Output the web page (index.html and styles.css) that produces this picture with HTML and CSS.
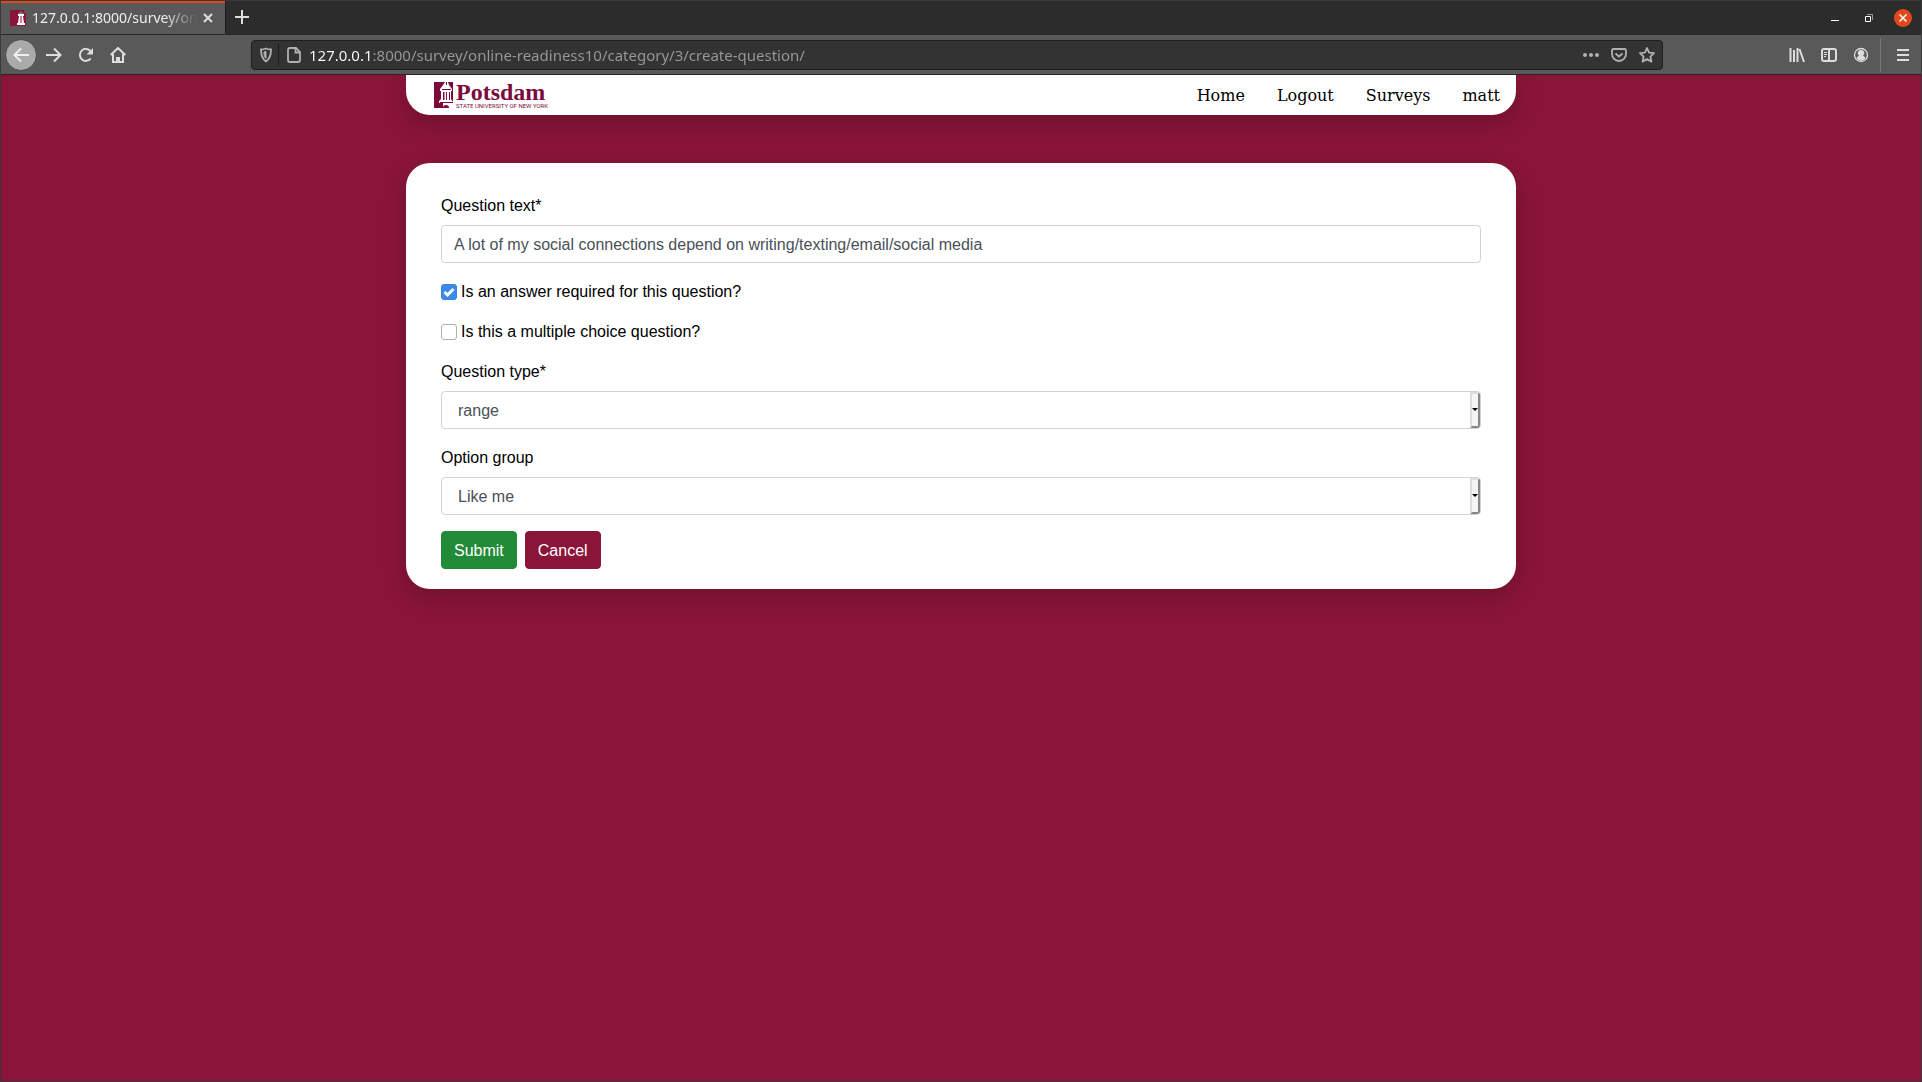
FILE: index.html
```html
<!DOCTYPE html>
<html lang="en">
<head>
<meta charset="utf-8">
<title>Create question</title>
<link rel="stylesheet" href="styles.css">
</head>
<body>
<div class="window">
  <header class="chrome">
    <div class="tabs">
      <div class="tab">
        <svg class="favicon" width="16" height="16" viewBox="0 0 16 16"><path fill="#8a1538" d="M0 0h16v16H0z"/><path fill="#595959" d="M14 0h2v3h-2z"/><path fill="#777" d="M8 4l2-2 1-1 1 1 2 2z"/><path fill="#fff" d="M8 4h6v2H8zM7 13h8v2H7zM9 6h1v7H8zM12 6h1l1 7h-2zM10.500 6h1v7h-1z"/></svg>
        <span class="tab-title">127.0.0.1:8000/survey/on</span>
        <button class="icon-button tab-close" aria-label="Close tab"><svg width="10" height="10" viewBox="0 0 10 10"><path d="M1 1l8 8M9 1l-8 8"/></svg></button>
      </div>
      <button class="icon-button new-tab" aria-label="New tab"><svg width="14" height="14" viewBox="0 0 14 14"><path d="M7 0v14M0 7h14"/></svg></button>
      <div class="window-controls">
        <button class="icon-button" aria-label="Minimize"><svg width="8" height="12" viewBox="0 0 8 12"><path fill="none" stroke-width="1" d="M0 8.500h8"/></svg></button>
        <button class="icon-button" aria-label="Restore"><svg width="8" height="8" viewBox="0 0 8 8"><path stroke-width="1" d="M.5 2.500h5v5h-5z"/><path stroke-width="1" opacity=".5" d="M2 .5h5.500V6"/></svg></button>
        <button class="icon-button close-window" aria-label="Close window"><svg width="8" height="8" viewBox="0 0 8 8"><path d="M.5.5l7 7M7.500.5l-7 7"/></svg></button>
      </div>
    </div>
    <div class="toolbar">
      <div class="nav-buttons">
        <button class="icon-button back" aria-label="Back"><svg width="16" height="16" viewBox="0 0 16 16"><path d="M16 8H1M8 1.500L1.500 8 8 14.500"/></svg></button>
        <button class="icon-button" aria-label="Forward"><svg width="16" height="16" viewBox="0 0 16 16"><path d="M0 8h15M8 1.500L14.500 8 8 14.500"/></svg></button>
        <button class="icon-button" aria-label="Reload"><svg width="16" height="16" viewBox="0 0 16 16"><path d="M12.700 11.500A6 6 0 1 1 12.500 4l1.500 2"/><path fill="currentColor" stroke="none" d="M15 1v6.500H8.500z"/></svg></button>
        <button class="icon-button" aria-label="Home page"><svg width="16" height="16" viewBox="0 0 16 16"><path d="M.7 8L8 1l7.300 7M3 7v8h10V7M7 15v-4h2v4"/></svg></button>
      </div>
      <div class="address">
        <svg width="14" height="16" viewBox="0 0 14 16"><path d="M7 1.500c2 1 4 1 5 1 0 6-1 9.500-5 12-4-2.500-5-6-5-12 1 0 3 0 5-1z"/><path d="M7 4.500v7C5.500 10 5 8 5 5z" fill="currentColor" stroke-width="1"/></svg>
        <span class="address-divider"></span>
        <svg width="14" height="16" viewBox="0 0 14 16"><path d="M9 1H3Q1 1 1 3v10q0 2 2 2h8q2 0 2-2V5zM8.500 1v4.500H13"/></svg>
        <input class="url-text" type="text" aria-label="Address" value="127.0.0.1:8000/survey/online-readiness10/category/3/create-question/">
        <div class="address-actions">
          <svg width="16" height="16" viewBox="0 0 16 16"><g fill="currentColor" stroke="none"><circle cx="2" cy="8" r="2"/><circle cx="8" cy="8" r="2"/><circle cx="14" cy="8" r="2"/></g></svg>
          <svg width="16" height="16" viewBox="0 0 16 16"><path d="M2.500 2h11Q15 2 15 3.500V7A7 7 0 0 1 1 7V3.500Q1 2 2.500 2zM4.500 6.500L8 9.500l3.500-3"/></svg>
          <svg width="16" height="16" viewBox="0 0 16 16"><path stroke-linejoin="round" d="M8 1l2.100 4.600 4.900.6-3.600 3.400 1 5L8 12.100 3.600 14.600l1-5L1 6.200l4.900-.6z"/></svg>
        </div>
      </div>
      <div class="tools">
        <button class="icon-button" aria-label="Library"><svg width="16" height="16" viewBox="0 0 16 16"><path d="M1.500 1v14M5 3v12M8.500 1v14M10.500 2L15 15"/></svg></button>
        <button class="icon-button" aria-label="Sidebars"><svg width="16" height="16" viewBox="0 0 16 16"><rect x="1" y="2" width="14" height="12" rx="2"/><path d="M8 2v12"/><path stroke-width="1" d="M3 5.500h3M3 7.500h3M3 9.500h2"/></svg></button>
        <button class="icon-button" aria-label="Account"><svg width="16" height="16" viewBox="0 0 16 16"><circle cx="8" cy="8" r="6.500" stroke-width="1.300"/><path fill="currentColor" stroke="none" d="M8 3a3 3 0 0 1 2 5.500Q12 9.500 12.500 11a5 5 0 0 1-9 0Q4 9.500 6 8.500A3 3 0 0 1 8 3z"/></svg></button>
        <span class="tool-divider"></span>
        <button class="icon-button" aria-label="Menu"><svg width="12" height="12" viewBox="0 0 12 12"><path d="M0 1h12M0 6h12M0 11h12"/></svg></button>
      </div>
    </div>
  </header>

  <div class="page">
    <nav class="navbar">
      <a class="brand" href="#">
        <svg width="19" height="26" viewBox="0 0 19 26"><path fill="#7c0a3a" d="M0 0h11L9 3 6 7v2h1v8l-2 2v2h4v5H0zM14 0h5v20l-2-3V9h1V7l-3-4z"/><path fill="#7c0a3a" d="M9 10h1.500v8H9zM12 10h1v8h-1zM15 10h1v8h-1zM8 7h9v1H8zM6 20h13v1H6zM9 26q0-3 3-3t3 3zM12 0h1v3h-1z"/></svg>
        <span class="brand-text"><span class="brand-name">Potsdam</span><span class="brand-sub">STATE UNIVERSITY OF NEW YORK</span></span>
      </a>
      <div class="links"><a href="#">Home</a><a href="#">Logout</a><a href="#">Surveys</a><a href="#">matt</a></div>
    </nav>
    <main class="card">
      <form class="form">
        <div class="field">
          <label for="text">Question text*</label>
          <input class="control" id="text" type="text" value="A lot of my social connections depend on writing/texting/email/social media">
        </div>
        <div class="check"><input type="checkbox" id="required" checked><label for="required">Is an answer required for this question?</label></div>
        <div class="check"><input type="checkbox" id="multiple"><label for="multiple">Is this a multiple choice question?</label></div>
        <div class="field">
          <label for="type">Question type*</label>
          <div class="select"><select class="control" id="type"><option>range</option></select></div>
        </div>
        <div class="field">
          <label for="group">Option group</label>
          <div class="select"><select class="control" id="group"><option>Like me</option></select></div>
        </div>
        <div class="actions"><button class="button submit" type="submit">Submit</button><button class="button cancel" type="button">Cancel</button></div>
      </form>
    </main>
  </div>
</div>
</body>
</html>
```
FILE: styles.css
```css
*, *::before, *::after { box-sizing: border-box; }

body { margin: 0; font: 16px/24px "Liberation Sans", Arial, sans-serif; color: #000; }

.window {
  display: flex;
  flex-direction: column;
  min-height: 100vh;
  border: 1px solid #393939;
  background: #8a1538;
}

/* Browser frame */
.chrome { position: relative; z-index: 1; font-family: "Noto Sans", sans-serif; color: #ddd; background: #595959; border-bottom: 1px solid #262626; }
.chrome svg { display: block; flex: none; fill: none; stroke: currentColor; stroke-width: 2; }
.chrome .favicon { stroke: none; }
.tabs { display: flex; height: 33px; background: #2c2c2c; }
.tab { display: flex; align-items: center; width: 224px; padding: 0 12px 2px 9px; background: #595959; border-top: 2px solid #e2481d; }
.tab-title {
  flex: 1;
  margin-left: 6px;
  overflow: hidden;
  white-space: nowrap;
  font-size: 14px;
  color: #eee;
  -webkit-mask-image: linear-gradient(to right, #000 80%, transparent);
  mask-image: linear-gradient(to right, #000 80%, transparent);
}
.icon-button { display: flex; align-items: center; justify-content: center; width: 32px; height: 32px; padding: 0; border: 0; border-radius: 50%; background: none; color: #ddd; }
.tab-close { width: 10px; margin-left: 6px; }
.new-tab { width: 32px; border-left: 1px solid #1c1c1c; border-radius: 0; }
.window-controls { display: flex; align-items: center; gap: 16px; margin-left: auto; padding-right: 9px; }
.window-controls .icon-button { width: 18px; height: 18px; color: #fff; }
.window-controls .close-window { background: #e2481d; }
.close-window svg { stroke-width: 1.5; }

.toolbar { display: flex; align-items: center; height: 40px; padding: 0 2px 0 4px; border-top: 1px solid #262626; }
.nav-buttons { display: flex; flex: none; width: 246px; }
.nav-buttons .back { margin-right: 1px; background: #aaa; color: #eee; border: 1px solid #484848; }
.address { display: flex; flex: 1; align-items: center; height: 30px; padding: 0 7px; background: #333; border: 1px solid #1f1f1f; border-radius: 4px; color: #b1b1b1; }
.chrome .address svg { stroke-width: 1.8; }
.address-divider { width: 1px; height: 22px; margin: 0 8px 0 5px; background: #1c1c1c; }
.url-text {
  flex: 1;
  height: 28px;
  margin-left: 8px;
  padding: 0;
  border: 0;
  outline: 0;
  font: 15px/28px "Noto Sans", sans-serif;
  color: transparent;
  /* host in white, path in grey */
  background: linear-gradient(to right, #fff 64px, #999 64px);
  -webkit-background-clip: text;
  background-clip: text;
}
.address-actions { display: flex; gap: 12px; }
.tools { display: flex; flex: none; width: 256px; align-items: center; justify-content: flex-end; }
.tool-divider { width: 1px; height: 34px; margin: 0 6px 0 3px; background: #777; }

/* Survey site */
.page { width: 100%; max-width: 1110px; margin: 0 auto; }
.navbar, .card { background: #fff; box-shadow: 0 8px 24px rgba(0, 0, 0, .2); }
.navbar { display: flex; align-items: center; justify-content: space-between; height: 40px; padding: 2px 16px 0 28px; border-radius: 0 0 24px 24px; }
.brand { display: flex; gap: 3px; color: #7c0a3a; text-decoration: none; }
.brand-text { display: flex; flex-direction: column; }
.brand-name { font: bold 24px/20px "Liberation Serif", serif; }
.brand-sub { font: 6px/8px Roboto, sans-serif; white-space: nowrap; }
.links { display: flex; gap: 32px; font-family: "DejaVu Serif", serif; }
.links a { color: #000; text-decoration: none; }

.card { margin-top: 48px; padding: 30px 35px 20px; border-radius: 24px; }
.form { display: flex; flex-direction: column; gap: 16px; }
.field { display: flex; flex-direction: column; gap: 6px; line-height: 26px; }
.control {
  width: 100%;
  height: 38px;
  padding: 7px 12px 5px;
  border: 1px solid #ced4da;
  border-radius: 4px;
  background: #fff;
  font: inherit;
  line-height: 24px;
  color: #495057;
  appearance: none;
}
.select { position: relative; }
.select .control { display: block; padding-left: 16px; }
.select::before {
  content: "";
  position: absolute;
  top: 1px;
  right: 1px;
  width: 10px;
  height: 36px;
  border: 2px solid;
  border-color: #ddd #888 #888 #ddd;
  border-radius: 0 3px 3px 0;
  background: #f6f5f4;
  pointer-events: none;
}
.select::after {
  content: "";
  position: absolute;
  top: 17px;
  right: 3px;
  border: 3px solid transparent;
  border-top-color: #000;
  border-bottom: 0;
  pointer-events: none;
}
.check { display: flex; align-items: center; gap: 4px; height: 24px; padding-top: 2px; }
.check input {
  width: 16px;
  height: 16px;
  margin: 0;
  appearance: none;
  border: 1px solid #b6b0aa;
  border-radius: 3px;
  background: #fff;
}
.check input:checked {
  border-color: #3584e4;
  background: #3d8ae6 url("data:image/svg+xml,%3Csvg xmlns='http://www.w3.org/2000/svg' viewBox='0 0 14 14'%3E%3Cpath d='M2.500 7l3 3 6-6' fill='none' stroke='white' stroke-width='3'/%3E%3C/svg%3E") center / 14px 14px;
}
.actions { display: flex; gap: 8px; }
.button { height: 38px; padding: 7px 12px 5px; border: 1px solid; border-radius: 4px; font: inherit; color: #fff; }
.submit { background: #228b38; border-color: #218838; }
.cancel { background: #8a1538; border-color: #8a1538; }
```
